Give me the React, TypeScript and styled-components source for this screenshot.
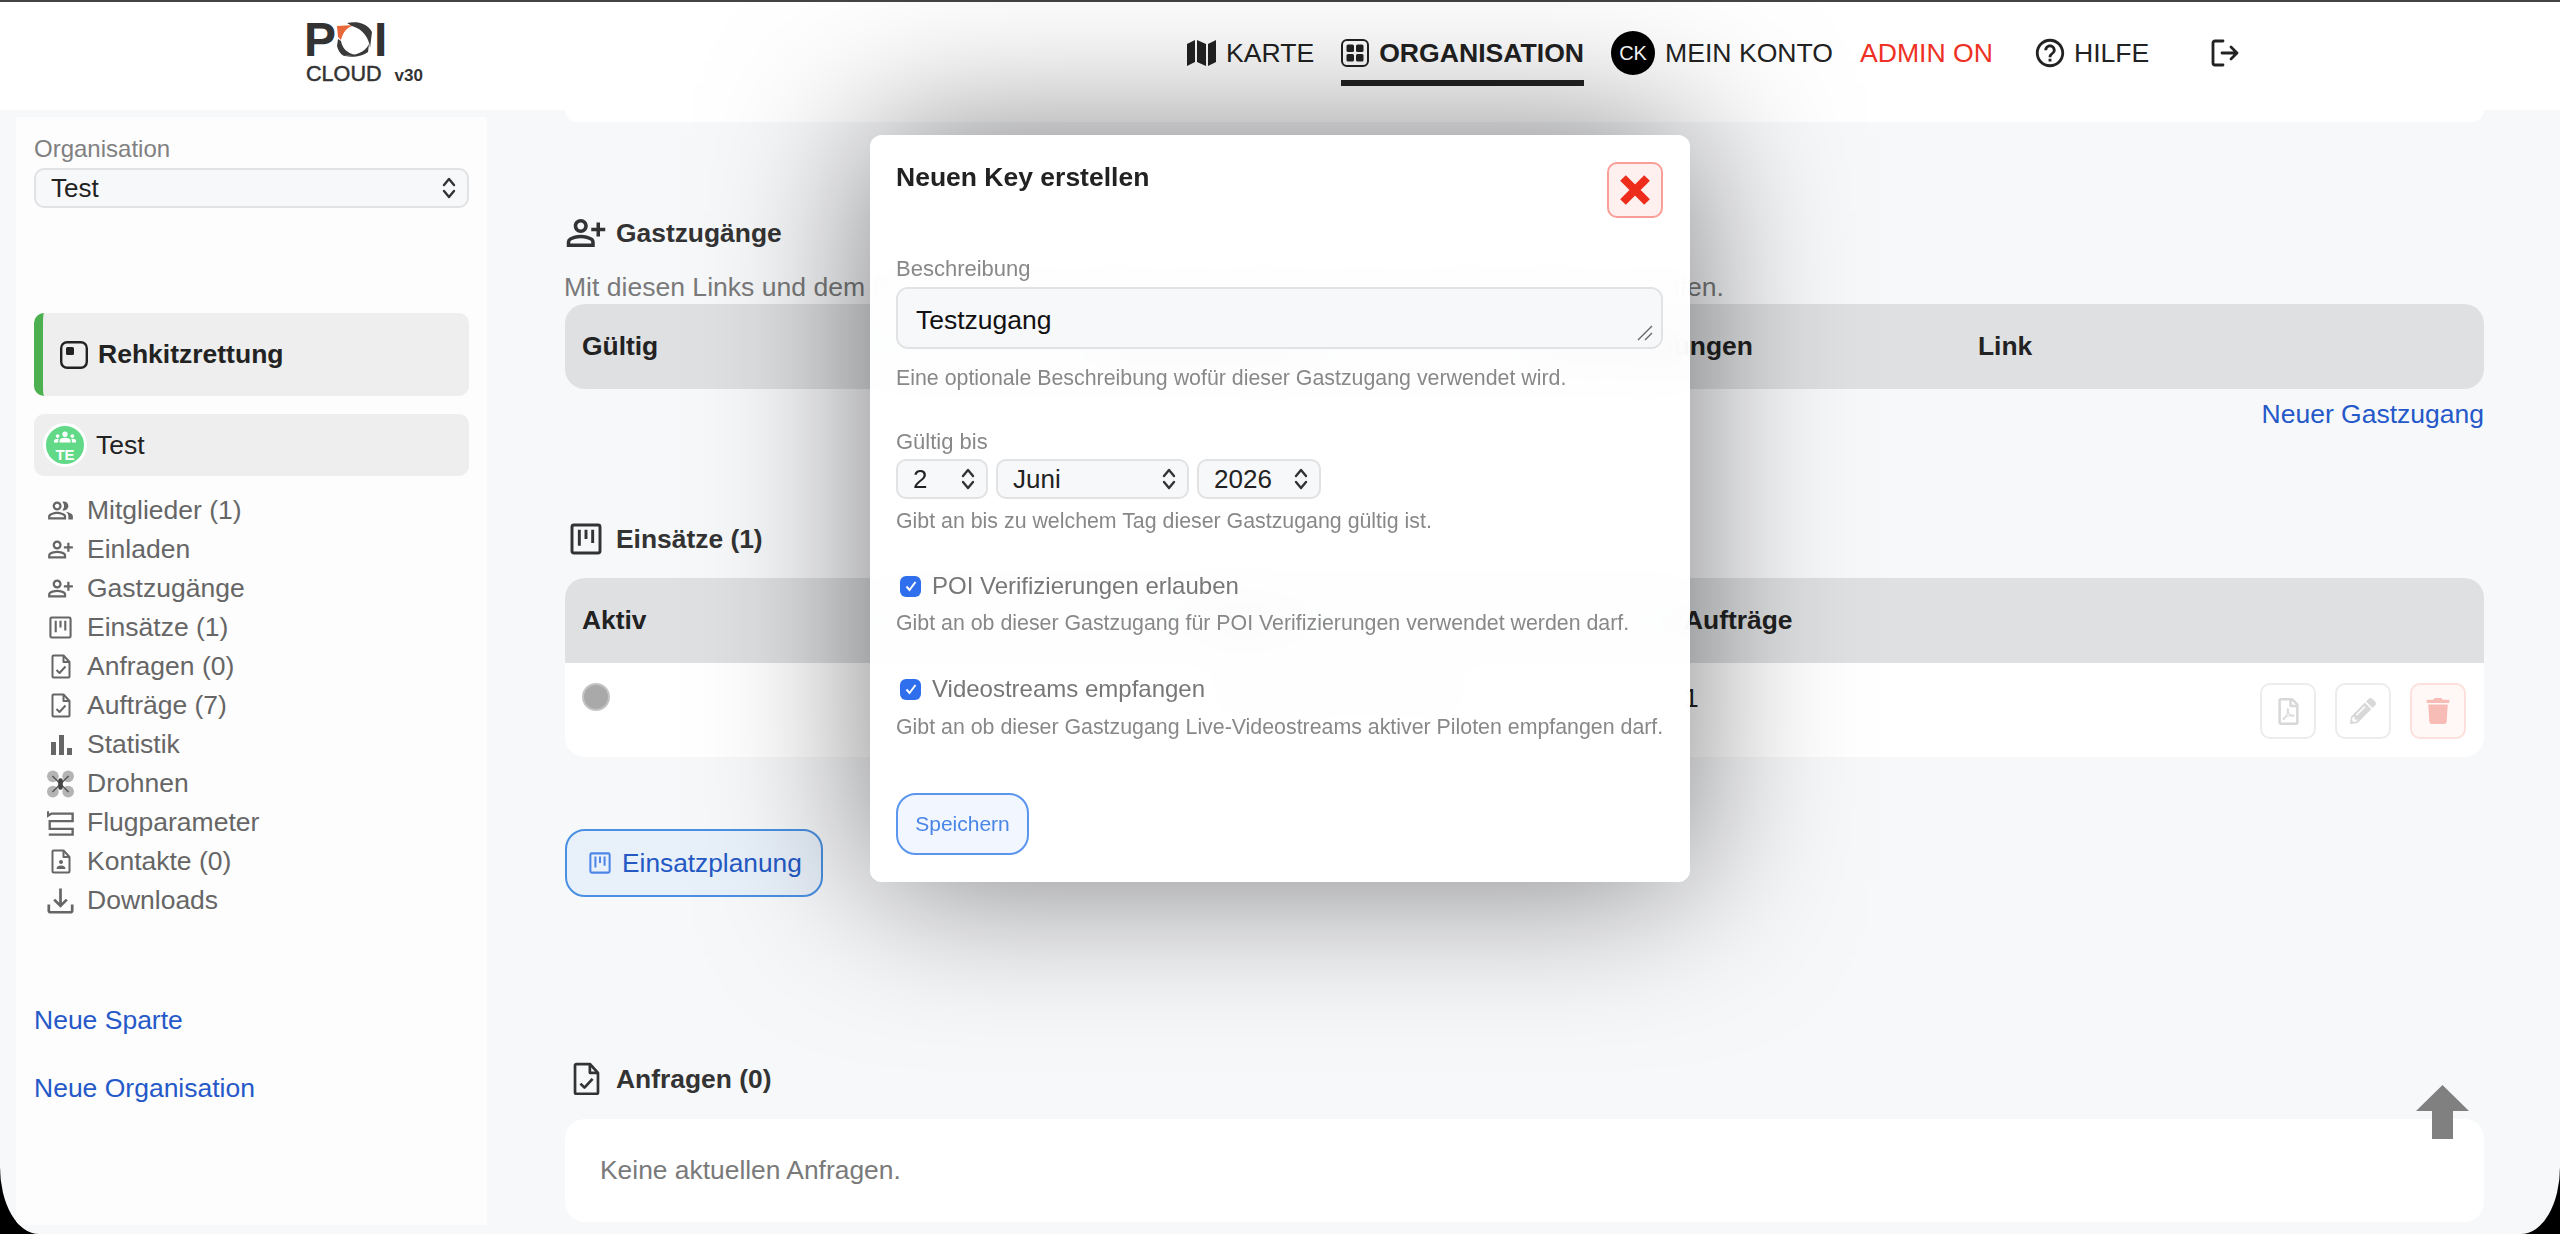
import React from "react";
import styled, { createGlobalStyle } from "styled-components";
import { MdOutlinePersonAddAlt, MdOutlinePeopleAlt, MdGroups, MdOutlineHelpOutline } from "react-icons/md";
import { FaRegFilePdf, FaPencilAlt, FaTrash } from "react-icons/fa";

const Global = createGlobalStyle`
  html, body { margin: 0; padding: 0; background: #000; }
  * { box-sizing: border-box; }
  body { font-family: "Liberation Sans", Arial, sans-serif; }
`;

const Screen = styled.div`
  position: relative;
  width: 2560px;
  height: 1234px;
  overflow: hidden;
  display: flex;
  flex-direction: column;
  background: #f7f8fa;
  border-radius: 0 0 39px 39px / 0 0 67px 67px;
`;

const Header = styled.header`
  flex: none;
  height: 110px;
  display: flex;
  align-items: flex-start;
  background: #fff;
  border-top: 2px solid #444;
  padding-left: 304px;
`;

const Logo = styled.div`
  width: 883px;
  padding-top: 20px;
  color: #333;
`;
const LogoMark = styled.div`
  display: flex;
  align-items: flex-start;
  height: 37px;
  gap: 1px;
`;
const LogoLetter = styled.span`
  font-size: 48px;
  font-weight: 700;
  line-height: 36px;
  height: 36px;
  color: #333;
`;
const LogoLine = styled.div`
  display: flex;
  align-items: baseline;
  margin-top: 4px;
  padding-left: 2px;
  line-height: 22px;
`;
const LogoCloud = styled.span`
  font-size: 21.6px;
  color: #333;
  -webkit-text-stroke: 0.5px #333;
`;
const LogoVersion = styled.span`
  font-size: 17px;
  font-weight: 700;
  margin-left: 13px;
`;

const Nav = styled.nav`
  display: flex;
  align-items: center;
  height: 102px;
  gap: 27px;
`;
const NavItem = styled.a<{ $ml?: number; $active?: boolean; $color?: string; $gap?: number }>`
  position: relative;
  display: flex;
  align-items: center;
  gap: ${(p) => p.$gap ?? 10}px;
  margin-left: ${(p) => p.$ml ?? 0}px;
  font-size: 26.6px;
  font-weight: ${(p) => (p.$active ? 700 : 400)};
  color: ${(p) => p.$color ?? "#222"};
  ${(p) =>
    p.$active
      ? `&::after { content: ""; position: absolute; left: 0; right: 0; top: 42px; height: 6px; background: #222; }`
      : ""}
`;
const CkBadge = styled.span`
  width: 44px;
  height: 44px;
  border-radius: 50%;
  background: #000;
  color: #fff;
  font-size: 20px;
  display: flex;
  align-items: center;
  justify-content: center;
`;

const Body = styled.div`
  flex: 1;
  display: flex;
  min-height: 0;
`;

const Sidebar = styled.aside`
  flex: none;
  width: 471px;
  margin: 7px 0 9px 16px;
  padding: 18px 18px 0;
  background: #fdfdfe;
`;
const SideLabel = styled.div`
  font-size: 24px;
  line-height: 28px;
  color: #808080;
`;
const SelectBox = styled.div<{ $w?: number; $h: number; $mt?: number }>`
  display: flex;
  align-items: center;
  justify-content: space-between;
  width: ${(p) => (p.$w ? `${p.$w}px` : "100%")};
  height: ${(p) => p.$h}px;
  margin-top: ${(p) => p.$mt ?? 0}px;
  padding: 0 10px 0 15px;
  border: 2px solid #e1e2e4;
  border-radius: 10px;
  background: #f7f8fa;
  font-size: 26px;
  color: #222;
`;
const SpartenCard = styled.div`
  display: flex;
  align-items: center;
  gap: 10px;
  height: 83px;
  margin-top: 105px;
  padding-left: 17px;
  border-left: 9px solid #4caf50;
  border-radius: 10px;
  background: #eee;
  font-size: 26.5px;
  font-weight: 700;
  color: #222;
`;
const OrgCard = styled.div`
  display: flex;
  align-items: center;
  gap: 9px;
  height: 62px;
  margin-top: 18px;
  padding-left: 9px;
  border-radius: 10px;
  background: #eee;
  font-size: 26.5px;
  color: #222;
`;
const Avatar = styled.span`
  flex: none;
  width: 44px;
  height: 44px;
  border-radius: 50%;
  border: 3px solid #fff;
  background: #62d987;
  color: #fff;
  display: flex;
  flex-direction: column;
  align-items: center;
  font-size: 15px;
  font-weight: 700;
  line-height: 14px;
`;
const SideNav = styled.ul`
  list-style: none;
  margin: 15px 0 0;
  padding: 0 0 0 13px;
`;
const SideNavItem = styled.li`
  display: flex;
  align-items: center;
  gap: 13px;
  height: 39.05px;
  font-size: 26.5px;
  color: #666;
`;
const SideIcon = styled.span`
  flex: none;
  width: 27px;
  height: 30px;
  display: flex;
  align-items: center;
  justify-content: center;
`;
const BlueLink = styled.a<{ $mt?: number; $right?: boolean }>`
  display: block;
  margin-top: ${(p) => p.$mt ?? 0}px;
  font-size: 26.5px;
  line-height: 32px;
  color: #2558c8;
  text-align: ${(p) => (p.$right ? "right" : "left")};
`;

const Main = styled.main`
  flex: none;
  width: 1919px;
  margin-left: 78px;
`;
const TopStub = styled.div`
  height: 12px;
  background: #fff;
  border-radius: 0 0 18px 18px;
`;
const SectionTitle = styled.h2<{ $mt: number }>`
  display: flex;
  align-items: center;
  gap: 9px;
  height: 40px;
  margin: ${(p) => p.$mt}px 0 0;
  font-size: 26.4px;
  font-weight: 700;
  color: #333;
`;
const TitleIcon = styled.span`
  flex: none;
  width: 42px;
  height: 40px;
  display: flex;
  align-items: center;
  justify-content: center;
  color: #333;
`;
const Desc = styled.p`
  margin: 19px 0 0 -1px;
  font-size: 26.55px;
  line-height: 30px;
  color: #7a7a7a;
  white-space: nowrap;
`;
const TableHead = styled.div<{ $cols: string; $mt: number; $open?: boolean }>`
  display: grid;
  grid-template-columns: ${(p) => p.$cols};
  align-items: center;
  height: 85px;
  margin-top: ${(p) => p.$mt}px;
  padding-left: 17px;
  border-radius: ${(p) => (p.$open ? "20px 20px 0 0" : "20px")};
  background: #dfe0e2;
  font-size: 26.4px;
  font-weight: 700;
  color: #222;
`;
const TableRow = styled.div<{ $cols: string }>`
  display: grid;
  grid-template-columns: ${(p) => p.$cols};
  align-items: start;
  height: 94px;
  padding: 20px 18px 0 17px;
  border-radius: 0 0 20px 20px;
  background: #fff;
  font-size: 26.4px;
  line-height: 30px;
  color: #222;
`;
const StatusDot = styled.span`
  display: block;
  width: 28px;
  height: 28px;
  border-radius: 50%;
  background: #a9a9a9;
  border: 2px solid #c4c4c4;
`;
const Actions = styled.div`
  display: flex;
  justify-content: flex-end;
  gap: 19px;
`;
const ActionButton = styled.button<{ $danger?: boolean }>`
  width: 56px;
  height: 56px;
  padding: 0;
  display: flex;
  align-items: center;
  justify-content: center;
  border-radius: 10px;
  border: 2px solid ${(p) => (p.$danger ? "#fde0dc" : "#ececec")};
  background: ${(p) => (p.$danger ? "#fff8f7" : "#fff")};
  color: ${(p) => (p.$danger ? "#f8bcb6" : "#d8d8d8")};
`;
const PlanButton = styled.button`
  display: flex;
  align-items: center;
  gap: 11px;
  width: 258px;
  height: 68px;
  margin-top: 72px;
  padding: 0 0 0 22px;
  border: 2px solid #4a90e2;
  border-radius: 20px;
  background: #e8f0fa;
  color: #2459c4;
  font-family: inherit;
  font-size: 26.3px;
`;
const EmptyCard = styled.div`
  display: flex;
  align-items: center;
  height: 103px;
  margin-top: 20px;
  padding-left: 35px;
  border-radius: 20px;
  background: #fff;
  font-size: 26.4px;
  color: #7a7a7a;
`;

const Modal = styled.section`
  position: absolute;
  left: 870px;
  top: 135px;
  width: 820px;
  height: 747px;
  padding: 27px 27px 0 26px;
  border-radius: 12px;
  background: rgba(255, 255, 255, 0.94);
  backdrop-filter: blur(20px);
  box-shadow: 0 0 160px rgba(0, 0, 0, 0.5);
`;
const ModalHead = styled.div`
  display: flex;
  justify-content: space-between;
  align-items: flex-start;
`;
const ModalTitle = styled.h3`
  margin: 0;
  font-size: 26.5px;
  line-height: 30px;
  font-weight: 700;
  color: #222;
`;
const CloseButton = styled.button`
  width: 56px;
  height: 56px;
  padding: 0;
  display: flex;
  align-items: center;
  justify-content: center;
  border: 2px solid #fa9e98;
  border-radius: 10px;
  background: #fef0ef;
`;
const FieldLabel = styled.div<{ $mt: number }>`
  margin-top: ${(p) => p.$mt}px;
  font-size: 22px;
  line-height: 26px;
  color: #888;
`;
const AreaWrap = styled.div`
  position: relative;
  margin-top: 5px;
`;
const Area = styled.textarea`
  display: block;
  width: 100%;
  height: 62px;
  padding: 16px 18px;
  border: 2px solid #e1e2e4;
  border-radius: 12px;
  background: #f7f8fa;
  resize: none;
  outline: none;
  font-family: inherit;
  font-size: 26.5px;
  line-height: 30px;
  color: #111;
`;
const Grip = styled.svg`
  position: absolute;
  right: 10px;
  bottom: 8px;
`;
const Help = styled.div<{ $mt: number }>`
  margin-top: ${(p) => p.$mt}px;
  font-size: 21.35px;
  line-height: 26px;
  color: #888;
  white-space: nowrap;
`;
const DateRow = styled.div`
  display: flex;
  gap: 8px;
  margin-top: 4px;
`;
const CheckRow = styled.label<{ $mt: number }>`
  display: flex;
  align-items: center;
  gap: 11px;
  height: 28px;
  margin-top: ${(p) => p.$mt}px;
  padding-left: 4px;
  font-size: 24px;
  color: #777;
`;
const CheckBox = styled.span`
  flex: none;
  width: 21px;
  height: 21px;
  border-radius: 6px;
  background: #2f6fed;
  display: flex;
  align-items: center;
  justify-content: center;
`;
const SaveButton = styled.button`
  display: block;
  width: 133px;
  height: 62px;
  margin-top: 53px;
  padding: 0;
  border: 2px solid #5b95ee;
  border-radius: 20px;
  background: #f2f6fe;
  color: #4a86e8;
  font-family: inherit;
  font-size: 21px;
`;
const ScrollTop = styled.svg`
  position: absolute;
  left: 2416px;
  top: 1085px;
`;

const Chevrons = ({ c = "#333" }: { c?: string }) => (
  <svg width="16" height="24" viewBox="0 0 16 24" fill="none" stroke={c} strokeWidth="2.4" strokeLinecap="round" strokeLinejoin="round">
    <path d="M3 9l5-6 5 6M3 15l5 6 5-6" />
  </svg>
);
const Kanban = ({ s, w = 2, c = "currentColor" }: { s: number; w?: number; c?: string }) => (
  <svg width={s} height={s} viewBox="0 0 24 24" fill="none" stroke={c} strokeWidth={w}>
    <rect x="1.5" y="1.5" width="21" height="21" rx="1.5" />
    <path d="M7 5v12M12 5v7M17 5v10" />
  </svg>
);
const DocCheck = ({ s, w = 2, c = "currentColor", kind = "check" }: { s: number; w?: number; c?: string; kind?: "check" | "user" }) => (
  <svg width={s} height={s * 1.25} viewBox="0 0 20 25" fill="none" stroke={c} strokeWidth={w} strokeLinejoin="round">
    <path d="M3 1.5h9.5L18.5 8v14.5a1 1 0 0 1-1 1h-15a1 1 0 0 1-1-1v-20a1 1 0 0 1 1-1z" />
    <path d="M12.5 1.5V8h6" />
    {kind === "check" ? (
      <path d="M5.5 16l3 3L14.5 12.5" />
    ) : (
      <>
        <circle cx="10" cy="13" r="2" fill={c} stroke="none" />
        <path d="M5.5 20c0-2.5 2-3.5 4.5-3.5s4.5 1 4.5 3.5z" fill={c} stroke="none" />
      </>
    )}
  </svg>
);
const Bars = () => (
  <svg width="24" height="24" viewBox="0 0 24 24" fill="#666">
    <rect x="2" y="9" width="5" height="13" />
    <rect x="10" y="2" width="5" height="20" />
    <rect x="18" y="15" width="5" height="7" />
  </svg>
);
const Drone = () => (
  <svg width="30" height="30" viewBox="0 0 30 30">
    <g fill="#b4b4b4">
      <circle cx="6.5" cy="6.5" r="6.5" />
      <circle cx="23.5" cy="6.5" r="6.5" />
      <circle cx="6.5" cy="23.5" r="6.5" />
      <circle cx="23.5" cy="23.5" r="6.5" />
    </g>
    <path d="M6 6l18 18M24 6L6 24" stroke="#555" strokeWidth="1.6" />
    <rect x="12.5" y="8.5" width="5" height="13" rx="2.2" fill="#444" />
  </svg>
);
const Flight = () => (
  <svg width="30" height="30" viewBox="0 0 30 30" fill="none" stroke="#666" strokeWidth="2.6">
    <path d="M1 2v5l4-2.5H28.5V13H3v8.5h25.5V28H2" />
  </svg>
);
const Download = () => (
  <svg width="30" height="30" viewBox="0 0 30 30" fill="none" stroke="#666" strokeWidth="3">
    <path d="M15 1v19M8 13.5l7 7 7-7" />
    <path d="M2 19v6.5a2 2 0 0 0 2 2h22a2 2 0 0 0 2-2V19" />
  </svg>
);
const MapIcon = () => (
  <svg width="29" height="26" viewBox="0 0 29 26" fill="#222">
    <path d="M0 4l8-4v22l-8 4zM10 0l9 4v22l-9-4zM21 4l8-4v22l-8 4z" />
  </svg>
);
const OrgIcon = () => (
  <svg width="28" height="28" viewBox="0 0 28 28">
    <rect x="1" y="1" width="26" height="26" rx="5" fill="none" stroke="#222" strokeWidth="2" />
    <rect x="5.5" y="5.5" width="7.5" height="7.5" rx="1.5" fill="#222" />
    <rect x="15" y="5.5" width="7.5" height="7.5" rx="1.5" fill="#222" />
    <rect x="5.5" y="15" width="7.5" height="7.5" rx="1.5" fill="#222" />
    <rect x="15" y="15" width="7.5" height="7.5" rx="1.5" fill="#222" />
  </svg>
);
const Logout = () => (
  <svg width="28" height="28" viewBox="0 0 28 28" fill="none" stroke="#222" strokeWidth="2.8" strokeLinecap="round" strokeLinejoin="round">
    <path d="M12 2H4a2 2 0 0 0-2 2v20a2 2 0 0 0 2 2h8" />
    <path d="M11 14h15M20 8l6 6-6 6" />
  </svg>
);
const SpartenIcon = () => (
  <svg width="28" height="28" viewBox="0 0 28 28">
    <rect x="1.2" y="1.2" width="25.6" height="25.6" rx="6" fill="none" stroke="#222" strokeWidth="2.4" />
    <rect x="6" y="6" width="8" height="8" rx="1.5" fill="#222" />
  </svg>
);
const LogoRing = () => (
  <svg width="36" height="36" viewBox="0 0 36 36">
    <path d="M0 4 L18 3 C10 5 6 10 4 18 L1 15 Z" fill="#e8683a" />
    <path d="M10 1 C18 -1 30 0 35 10 L33 26 C32 16 26 7 15 4 Z" fill="#3a3a3a" />
    <path d="M32 22 L31 30 C26 34 16 36 8 34 C18 33 28 31 32 22 Z" fill="#3a3a3a" />
    <path d="M1 17 L4 19 C5 26 10 31 18 33 L7 34 C3 32 1 28 0 24 Z" fill="#3a3a3a" />
  </svg>
);

const sideItems: [React.ReactNode, string][] = [
  [<MdOutlinePeopleAlt size={29} color="#666" />, "Mitglieder (1)"],
  [<MdOutlinePersonAddAlt size={29} color="#666" />, "Einladen"],
  [<MdOutlinePersonAddAlt size={29} color="#666" />, "Gastzugänge"],
  [<Kanban s={23} w={2.2} c="#666" />, "Einsätze (1)"],
  [<DocCheck s={20} w={2} c="#666" />, "Anfragen (0)"],
  [<DocCheck s={20} w={2} c="#666" />, "Aufträge (7)"],
  [<Bars />, "Statistik"],
  [<Drone />, "Drohnen"],
  [<Flight />, "Flugparameter"],
  [<DocCheck s={20} w={2} c="#666" kind="user" />, "Kontakte (0)"],
  [<Download />, "Downloads"],
];

const COLS_A = "535px 435px 426px 1fr";
const COLS_B = "628px 474px 1fr auto";

export default function App() {
  return (
    <Screen>
      <Global />
      <Header>
        <Logo>
          <LogoMark>
            <LogoLetter>P</LogoLetter>
            <LogoRing />
            <LogoLetter>I</LogoLetter>
          </LogoMark>
          <LogoLine>
            <LogoCloud>CLOUD</LogoCloud>
            <LogoVersion>v30</LogoVersion>
          </LogoLine>
        </Logo>
        <Nav>
          <NavItem><MapIcon />KARTE</NavItem>
          <NavItem $active><OrgIcon />ORGANISATION</NavItem>
          <NavItem><CkBadge>CK</CkBadge>MEIN KONTO</NavItem>
          <NavItem $color="#ee3124">ADMIN ON</NavItem>
          <NavItem $ml={13} $gap={7}><MdOutlineHelpOutline size={34} />HILFE</NavItem>
          <NavItem $ml={35}><Logout /></NavItem>
        </Nav>
      </Header>
      <Body>
        <Sidebar>
          <SideLabel>Organisation</SideLabel>
          <SelectBox $h={40} $mt={5}>Test<Chevrons /></SelectBox>
          <SpartenCard><SpartenIcon />Rehkitzrettung</SpartenCard>
          <OrgCard>
            <Avatar>
              <MdGroups size={22} />
              <span>TE</span>
            </Avatar>
            Test
          </OrgCard>
          <SideNav>
            {sideItems.map(([icon, label]) => (
              <SideNavItem key={label}>
                <SideIcon>{icon}</SideIcon>
                {label}
              </SideNavItem>
            ))}
          </SideNav>
          <BlueLink $mt={83}>Neue Sparte</BlueLink>
          <BlueLink $mt={36}>Neue Organisation</BlueLink>
        </Sidebar>
        <Main>
          <TopStub />
          <SectionTitle $mt={91}>
            <TitleIcon><MdOutlinePersonAddAlt size={46} /></TitleIcon>
            Gastzugänge
          </SectionTitle>
          <Desc>Mit diesen Links und dem Passwort können Gäste ohne eigenes Konto auf alle Einsätze zugreifen.</Desc>
          <TableHead $cols={COLS_A} $mt={2}>
            <span>Gültig</span>
            <span>Beschreibung</span>
            <span>Berechtigungen</span>
            <span>Link</span>
          </TableHead>
          <BlueLink $mt={9} $right>Neuer Gastzugang</BlueLink>
          <SectionTitle $mt={89}>
            <TitleIcon><Kanban s={32} w={2.2} /></TitleIcon>
            Einsätze (1)
          </SectionTitle>
          <TableHead $cols={COLS_B} $mt={19} $open>
            <span>Aktiv</span>
            <span>Name</span>
            <span>Aufträge</span>
          </TableHead>
          <TableRow $cols={COLS_B}>
            <StatusDot />
            <span>Testeinsatz Juni 2026</span>
            <span>1</span>
            <Actions>
              <ActionButton><FaRegFilePdf size={27} /></ActionButton>
              <ActionButton><FaPencilAlt size={26} /></ActionButton>
              <ActionButton $danger><FaTrash size={26} /></ActionButton>
            </Actions>
          </TableRow>
          <PlanButton><Kanban s={22} w={2.2} c="#4a86e8" />Einsatzplanung</PlanButton>
          <SectionTitle $mt={162}>
            <TitleIcon><DocCheck s={27} w={2} /></TitleIcon>
            Anfragen (0)
          </SectionTitle>
          <EmptyCard>Keine aktuellen Anfragen.</EmptyCard>
        </Main>
      </Body>
      <Modal>
        <ModalHead>
          <ModalTitle>Neuen Key erstellen</ModalTitle>
          <CloseButton aria-label="Schließen">
            <svg width="30" height="30" viewBox="0 0 30 30" stroke="#ee2c1c" strokeWidth="8" strokeLinecap="butt">
              <path d="M3 3l24 24M27 3L3 27" />
            </svg>
          </CloseButton>
        </ModalHead>
        <FieldLabel $mt={38}>Beschreibung</FieldLabel>
        <AreaWrap>
          <Area readOnly defaultValue="Testzugang" />
          <Grip width="16" height="16" viewBox="0 0 16 16" stroke="#666" strokeWidth="1.4">
            <path d="M1 15L15 1M8 15l7-7" />
          </Grip>
        </AreaWrap>
        <Help $mt={16}>Eine optionale Beschreibung wofür dieser Gastzugang verwendet wird.</Help>
        <FieldLabel $mt={38}>Gültig bis</FieldLabel>
        <DateRow>
          <SelectBox $w={92} $h={40}>2<Chevrons /></SelectBox>
          <SelectBox $w={193} $h={40}>Juni<Chevrons /></SelectBox>
          <SelectBox $w={124} $h={40}>2026<Chevrons /></SelectBox>
        </DateRow>
        <Help $mt={9}>Gibt an bis zu welchem Tag dieser Gastzugang gültig ist.</Help>
        <CheckRow $mt={38}>
          <CheckBox>
            <svg width="14" height="14" viewBox="0 0 14 14" fill="none" stroke="#fff" strokeWidth="2"><path d="M2.5 7.5l3 3.5 6-8" /></svg>
          </CheckBox>
          POI Verifizierungen erlauben
        </CheckRow>
        <Help $mt={10}>Gibt an ob dieser Gastzugang für POI Verifizierungen verwendet werden darf.</Help>
        <CheckRow $mt={39}>
          <CheckBox>
            <svg width="14" height="14" viewBox="0 0 14 14" fill="none" stroke="#fff" strokeWidth="2"><path d="M2.5 7.5l3 3.5 6-8" /></svg>
          </CheckBox>
          Videostreams empfangen
        </CheckRow>
        <Help $mt={11}>Gibt an ob dieser Gastzugang Live-Videostreams aktiver Piloten empfangen darf.</Help>
        <SaveButton>Speichern</SaveButton>
      </Modal>
      <ScrollTop width="53" height="54" viewBox="0 0 53 54" fill="#808080">
        <polygon points="26.5,0 53,26 37,26 37,54 16,54 16,26 0,26" />
      </ScrollTop>
    </Screen>
  );
}
